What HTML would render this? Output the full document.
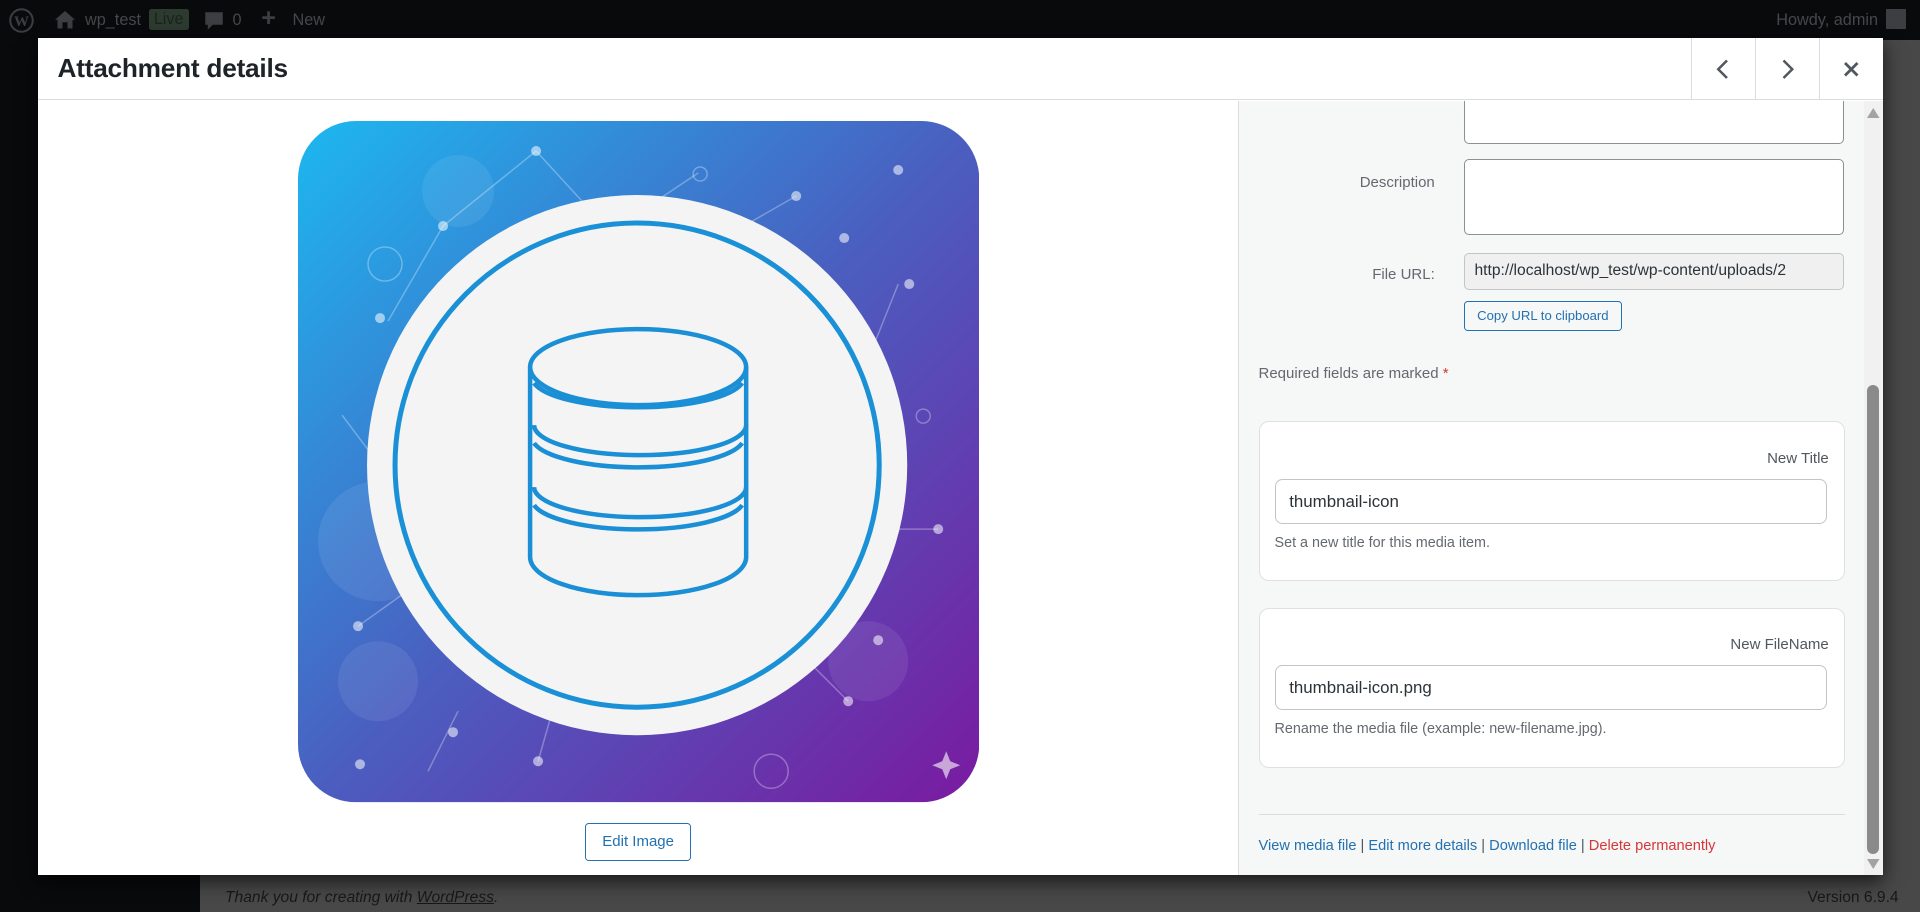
<!DOCTYPE html>
<html><head><meta charset="utf-8"><style>
*{box-sizing:border-box;margin:0;padding:0}
html,body{width:1920px;height:912px;overflow:hidden;background:#484848}
body{font-family:"Liberation Sans",sans-serif}
#w{zoom:1.25;position:relative;width:1536px;height:729.6px;overflow:hidden;background:#484848}
.abs{position:absolute}
#bar{left:0;top:0;width:1536px;height:32px;background:#090a0c;color:#45474a;font-size:13px}
#menu{left:0;top:32px;width:160px;height:700px;background:#090a0c}
#modal{left:30px;top:30px;width:1476px;height:669.6px;background:#fff;box-shadow:0 5px 15px rgba(0,0,0,.7)}
#hdr{left:0;top:0;width:1476px;height:50px;border-bottom:1px solid #dcdcde}
#hdr h1{position:absolute;left:16px;top:12px;font-size:21px;font-weight:bold;color:#1d2327;letter-spacing:-.2px}
.nb{position:absolute;top:0;width:51px;height:50px;border-left:1px solid #dcdcde}
#side{left:960px;top:51px;width:516px;height:619px;background:#f6f7f7;border-left:1px solid #dcdcde;overflow:hidden}
.lbl{position:absolute;font-size:12px;color:#646970;text-align:right}
.ta{position:absolute;background:#fff;border:1px solid #8c8f94;border-radius:4px}
.card{position:absolute;left:16px;width:469px;background:#fff;border:1px solid #e0e0e0;border-radius:8px}
.inp{position:absolute;left:12px;width:442px;height:36px;border:1px solid #c3c4c7;border-radius:6px;font-size:13.5px;color:#2c3338;padding:10px 11px}
.help{position:absolute;left:12px;font-size:11.5px;color:#646970}
a{color:#2271b1;text-decoration:none}
</style></head><body><div id="w">
<div id="bar" class="abs">
 <svg class="abs" style="left:7px;top:6px" width="20" height="20" viewBox="0 0 20 20"><circle cx="10" cy="10" r="9" fill="none" stroke="#3c3e41" stroke-width="1.6"/><text x="10" y="14.5" font-size="12" font-family="Liberation Serif" font-weight="bold" fill="#3c3e41" text-anchor="middle">W</text></svg>
 <svg class="abs" style="left:44px;top:9px" width="16" height="14" viewBox="0 0 16 14"><path d="M8 0L0 7h2v7h4V9h4v5h4V7h2z" fill="#3c3e41"/></svg>
 <span class="abs" style="left:68px;top:9px">wp_test</span>
 <span class="abs" style="left:119px;top:7px;background:#2d3a2f;color:#1a241b;padding:1px 4px;border-radius:2px">Live</span>
 <svg class="abs" style="left:163px;top:9px" width="16" height="16" viewBox="0 0 16 16"><path d="M1 1h14v10H7l-4 4v-4H1z" fill="#3c3e41"/></svg>
 <span class="abs" style="left:186px;top:9px">0</span>
 <span class="abs" style="left:209px;top:3px;font-size:20px;font-weight:bold;color:#3c3e41">+</span>
 <span class="abs" style="left:234px;top:9px">New</span>
 <span class="abs" style="left:1421px;top:9px">Howdy, admin</span>
 <div class="abs" style="left:1509px;top:7px;width:16px;height:16px;background:#3c3e41"></div>
</div>
<div id="menu" class="abs"></div>
<div class="abs" style="left:180px;top:711px;font-size:12.5px;font-style:italic;color:#17181a">Thank you for creating with <span style="text-decoration:underline">WordPress</span>.</div>
<div class="abs" style="left:1446px;top:711px;font-size:12.5px;color:#17181a">Version 6.9.4</div>

<div id="modal" class="abs">
 <div id="hdr" class="abs"><h1>Attachment details</h1>
  <div class="nb" style="left:1323px"><svg width="50" height="50"><path d="M28 18l-7 7 7 7" fill="none" stroke="#50575e" stroke-width="2"/></svg></div>
  <div class="nb" style="left:1374px"><svg width="50" height="50"><path d="M22 18l7 7-7 7" fill="none" stroke="#50575e" stroke-width="2"/></svg></div>
  <div class="nb" style="left:1425px"><svg width="50" height="50"><path d="M20 20l10 10M30 20L20 30" fill="none" stroke="#50575e" stroke-width="2.2"/></svg></div>
 </div>
 <svg class="abs" style="left:208px;top:67px" width="545" height="545" viewBox="0 0 681 681">
  <defs><linearGradient id="g" x1="0" y1="0" x2="1" y2="1"><stop offset="0" stop-color="#1cb8f0"/><stop offset=".5" stop-color="#4a5fc0"/><stop offset="1" stop-color="#7a1aa0"/></linearGradient>
  <clipPath id="c"><rect width="681" height="681" rx="58"/></clipPath></defs>
  <g clip-path="url(#c)"><rect width="681" height="681" fill="url(#g)"/>
   <g stroke="rgba(255,255,255,.3)" stroke-width="1.5" fill="none">
    <path d="M238 30L145 105 90 200M238 30l55 60M400 52l-60 40M498 75l-70 40M600 163l-40 100M44 294l60 80M60 505l70-50M580 408l60 0M550 580l-50 -50M240 640l20-70M130 650l30-60"/>
    <circle cx="87" cy="143" r="17"/><circle cx="473" cy="650" r="17"/><circle cx="402" cy="53" r="7"/><circle cx="625" cy="295" r="7"/>
   </g>
   <g fill="rgba(255,255,255,.55)"><circle cx="238" cy="30" r="5"/><circle cx="145" cy="105" r="5"/><circle cx="600" cy="49" r="5"/><circle cx="498" cy="75" r="5"/><circle cx="546" cy="117" r="5"/><circle cx="82" cy="197" r="5"/><circle cx="611" cy="163" r="5"/><circle cx="640" cy="408" r="5"/><circle cx="60" cy="505" r="5"/><circle cx="580" cy="519" r="5"/><circle cx="155" cy="611" r="5"/><circle cx="62" cy="643" r="5"/><circle cx="240" cy="640" r="5"/><circle cx="550" cy="580" r="5"/></g>
   <g fill="rgba(255,255,255,.08)"><circle cx="160" cy="70" r="36"/><circle cx="80" cy="420" r="60"/><circle cx="80" cy="560" r="40"/><circle cx="570" cy="540" r="40"/></g>
   <circle cx="339" cy="344" r="270" fill="#f4f4f4"/>
   <circle cx="339" cy="344" r="242" fill="none" stroke="#1a90d6" stroke-width="5"/>
   <g fill="none" stroke="#1a8fd6" stroke-width="4.5">
    <ellipse cx="340" cy="246" rx="108" ry="38"/>
    <path d="M232 246v190M448 246v190M232 436a108 38 0 0 0 216 0"/>
    <path d="M236 262a106 30 0 0 0 208 0M236 304a106 30 0 0 0 212 0M236 322a106 30 0 0 0 208 0M236 366a106 30 0 0 0 212 0M236 384a106 30 0 0 0 208 0"/>
   </g>
   <path d="M648 630l4 10 10 4-10 4-4 10-4-10-10-4 10-4z" fill="rgba(255,255,255,.6)"/>
  </g>
 </svg>
 <div class="abs" style="left:438px;top:628px;width:85px;height:31px;border:1px solid #2271b1;border-radius:3px;color:#2271b1;font-size:12px;text-align:center;line-height:29px">Edit Image</div>

 <div id="side" class="abs">
  <div class="ta" style="left:180px;top:-20px;width:304px;height:54px"></div>
  <div class="lbl" style="left:30px;width:127px;top:58px">Description</div>
  <div class="ta" style="left:180px;top:46px;width:304px;height:61px"></div>
  <div class="lbl" style="left:30px;width:127px;top:132px">File URL:</div>
  <div class="ta" style="left:180px;top:121px;width:304px;height:30px;background:#f0f0f1;border-color:#c3c4c7;font-size:12.5px;color:#2c3338;padding:7px 8px;white-space:nowrap;overflow:hidden">http://localhost/wp_test/wp-content/uploads/2</div>
  <div class="abs" style="left:180px;top:160px;width:127px;height:24px;border:1px solid #2271b1;border-radius:3px;color:#2271b1;font-size:10.5px;text-align:center;line-height:22px;background:#f6f7f7">Copy URL to clipboard</div>
  <div class="abs" style="left:16px;top:211px;font-size:12px;color:#646970">Required fields are marked <span style="color:#d63638">*</span></div>
  <div class="card" style="top:256px;height:128px">
   <div class="abs" style="right:12px;top:22px;font-size:12px;color:#50575e">New Title</div>
   <div class="inp" style="top:45px">thumbnail-icon</div>
   <div class="help" style="top:90px">Set a new title for this media item.</div>
  </div>
  <div class="card" style="top:405px;height:128px">
   <div class="abs" style="right:12px;top:22px;font-size:12px;color:#50575e">New FileName</div>
   <div class="inp" style="top:45px">thumbnail-icon.png</div>
   <div class="help" style="top:90px">Rename the media file (example: new-filename.jpg).</div>
  </div>
  <div class="abs" style="left:16px;top:570px;width:469px;height:1px;background:#dcdcde"></div>
  <div class="abs" style="left:16px;top:589px;font-size:11.7px;color:#50575e;white-space:nowrap"><a>View media file</a> | <a>Edit more details</a> | <a>Download file</a> | <a style="color:#d63638">Delete permanently</a></div>
  <div class="abs" style="left:500px;top:0;width:16px;height:619px;background:#f1f1f1"></div>
  <svg class="abs" style="left:503px;top:5px" width="10" height="8"><path d="M5 0L10 8H0z" fill="#a3a3a3"/></svg>
  <div class="abs" style="left:503px;top:227px;width:9px;height:375px;background:#8a8a8a;border-radius:5px"></div>
  <svg class="abs" style="left:503px;top:606px" width="10" height="8"><path d="M0 0h10L5 8z" fill="#a3a3a3"/></svg>
 </div>
</div>
</div></body></html>
